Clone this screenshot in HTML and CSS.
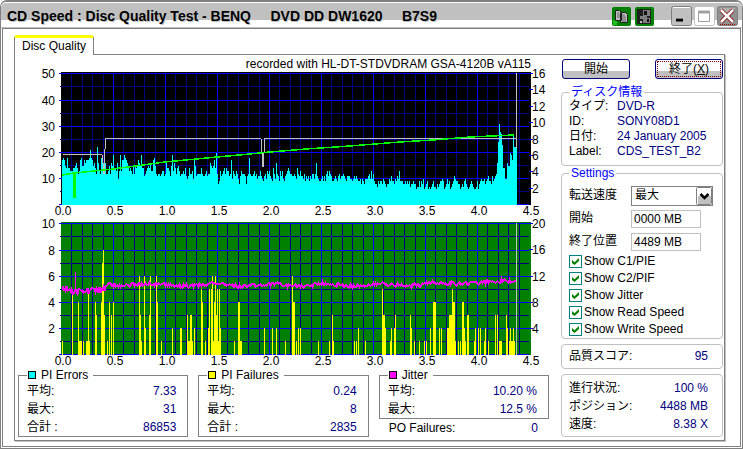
FILE: index.html
```html
<!DOCTYPE html>
<html lang="ja">
<head>
<meta charset="utf-8">
<title>CD Speed</title>
<link rel="stylesheet" href="styles.css">
</head>
<body>
<div class="window">
  <header class="titlebar">
    <h1 class="title">CD Speed : Disc Quality Test - BENQ     DVD DD DW1620     B7S9</h1>
    <div class="tools">
      <button class="tool" type="button" aria-label="Copy">
        <svg width="19" height="19" viewBox="0 0 19 19"><rect width="19" height="19" rx="2" fill="#008000"/><path d="M1 13h4v5H1z" fill="#20c020"/><path d="M3.500 3.500h4l2 2v8h-6zM8.500 5.500h5l2 2v8h-7z" fill="#c0c0c0" stroke="#202020"/><path d="M5 6h2M5 8h3M5 10h3M10 8h3M10 10h4M10 12h4M10 14h4" stroke="#606060"/></svg>
      </button>
      <button class="tool" type="button" aria-label="Save">
        <svg width="19" height="19" viewBox="0 0 19 19"><rect width="19" height="19" rx="2" fill="#008000"/><rect x="2" y="2" width="14" height="15" fill="#202020"/><path d="M8 3h7v6h-3v2h3v5H8v-4H5V9h3z" fill="#808080"/><path d="M9 4h3v4H9zM12 12h2v3h-2z" fill="#101010"/><path d="M5 14h2v2H5z" fill="#c0c0c0"/></svg>
      </button>
    </div>
    <div class="controls">
      <button class="control" type="button" aria-label="Minimize">
        <svg width="21" height="20" viewBox="0 0 21 20"><rect x=".5" y=".5" width="20" height="19" rx="2" fill="#c0c0c0" stroke="#808080"/><path d="M2 1.500h17" stroke="#fff"/><path d="M5 14h7" stroke="#000" stroke-width="3"/><path d="M5 12.500h7" stroke="#808080"/></svg>
      </button>
      <button class="control" type="button" aria-label="Maximize">
        <svg width="21" height="20" viewBox="0 0 21 20"><rect x=".5" y=".5" width="20" height="19" rx="2" fill="#fff" stroke="#c0c0c0"/><path d="M4.500 6.500h11v9h-11z" fill="#fff" stroke="#a0a0a0"/><path d="M4 6h12" stroke="#a0a0a0" stroke-width="3"/></svg>
      </button>
      <button class="control" type="button" aria-label="Close">
        <svg width="21" height="20" viewBox="0 0 21 20"><rect x=".5" y=".5" width="20" height="19" rx="2" fill="#909090" stroke="#808080"/><path d="M2 2h17l-8 6z" fill="#b0b0b0"/><path d="M4 4l12 12M16 4L4 16" stroke="#800000" stroke-width="4"/><path d="M4 4l12 12M16 4L4 16" stroke="#fff" stroke-width="2.500"/><path d="M3 18.500h16" stroke="#a00000" stroke-dasharray="1 1"/></svg>
      </button>
    </div>
  </header>
  <main class="client">
    <button class="tab" type="button">Disc Quality</button>
    <div class="panel">
      <section class="results">
        <svg class="chart" id="errors-chart" viewBox="18 56 531 164" role="img" aria-label="PI Errors"></svg>
        <svg class="chart" id="failures-chart" viewBox="18 220 531 148" role="img" aria-label="PI Failures"></svg>
        <div class="stats">
          <fieldset class="stat">
            <legend><i class="swatch cyan"></i>PI Errors</legend>
            <dl>
              <div class="row"><dt>平均:</dt><dd>7.33</dd></div>
              <div class="row"><dt>最大:</dt><dd>31</dd></div>
              <div class="row"><dt>合計 :</dt><dd>86853</dd></div>
            </dl>
          </fieldset>
          <fieldset class="stat">
            <legend><i class="swatch yellow"></i>PI Failures</legend>
            <dl>
              <div class="row"><dt>平均:</dt><dd>0.24</dd></div>
              <div class="row"><dt>最大:</dt><dd>8</dd></div>
              <div class="row"><dt>合計 :</dt><dd>2835</dd></div>
            </dl>
          </fieldset>
          <div>
            <fieldset class="stat">
              <legend><i class="swatch magenta"></i>Jitter</legend>
              <dl>
                <div class="row"><dt>平均:</dt><dd>10.20 %</dd></div>
                <div class="row"><dt>最大:</dt><dd>12.5 %</dd></div>
              </dl>
            </fieldset>
            <dl class="po"><div class="row"><dt>PO Failures:</dt><dd>0</dd></div></dl>
          </div>
        </div>
      </section>
      <aside class="side">
        <div class="actions">
          <button class="push" type="button">開始</button>
          <button class="push focused" type="button">終了(<u>X</u>)</button>
        </div>
        <fieldset class="group disc">
          <legend>ディスク情報</legend>
          <dl>
            <div class="info"><dt>タイプ:</dt><dd>DVD-R</dd></div>
            <div class="info"><dt>ID:</dt><dd>SONY08D1</dd></div>
            <div class="info"><dt>日付:</dt><dd>24 January 2005</dd></div>
            <div class="info"><dt>Label:</dt><dd>CDS_TEST_B2</dd></div>
          </dl>
        </fieldset>
        <fieldset class="group settings">
          <legend>Settings</legend>
          <div class="field"><label for="speed">転送速度</label>
            <span class="combo"><select id="speed"><option>最大</option></select>
              <svg class="arrow" width="16" height="18" viewBox="0 0 16 18"><rect x=".5" y=".5" width="15" height="17" rx="1" fill="#fff" stroke="#808080"/><path d="M2 9h13v8H2z" fill="#c0c0c0"/><path d="M4.500 7l4 4 4-4" fill="none" stroke="#000" stroke-width="2.500"/></svg></span></div>
          <div class="field"><label for="start">開始</label><input class="text" id="start" type="text" value="0000 MB"></div>
          <div class="field"><label for="end">終了位置</label><input class="text" id="end" type="text" value="4489 MB"></div>
          <label class="check"><input type="checkbox" checked>Show C1/PIE</label>
          <label class="check"><input type="checkbox" checked>Show C2/PIF</label>
          <label class="check"><input type="checkbox" checked>Show Jitter</label>
          <label class="check"><input type="checkbox" checked>Show Read Speed</label>
          <label class="check"><input type="checkbox" checked>Show Write Speed</label>
        </fieldset>
        <dl class="group score"><div class="row"><dt>品質スコア:</dt><dd>95</dd></div></dl>
        <dl class="group progress">
          <div class="row"><dt>進行状況:</dt><dd>100 %</dd></div>
          <div class="row"><dt>ポジション:</dt><dd>4488 MB</dd></div>
          <div class="row"><dt>速度:</dt><dd>8.38 X</dd></div>
        </dl>
      </aside>
    </div>
  </main>
</div>
<script src="charts.js"></script>
</body>
</html>
```
FILE: styles.css
```css
* { box-sizing: border-box; }

body {
  margin: 0;
  background: #fff;
  color: #000;
  font: 12px/15px "Liberation Sans", "Noto Sans CJK JP", sans-serif;
}

button, input, select { font: inherit; color: inherit; }
dl, dd, fieldset { margin: 0; }
fieldset { min-width: 0; }
svg { display: block; }

.window {
  display: flex;
  flex-direction: column;
  min-height: 100vh;
  padding: 0 1px 1px;
  border: 1px solid #808080;
  border-top-width: 2px;
  border-radius: 7px 7px 0 0;
}

.titlebar {
  display: flex;
  align-items: center;
  height: 26px;
  margin: 0 -1px;
  padding: 2px 4px 0 6px;
  border-top: 1px solid #fff;
  border-bottom: 1px solid #c0c0c0;
  border-radius: 5px 5px 0 0;
  background: linear-gradient(#c0c0c0 17px, #fff 17px);
}

.title {
  flex: 1;
  margin: 0;
  font-size: 14px;
  line-height: 20px;
  white-space: pre;
  text-shadow: 1px 1px #c0c0c0;
}

.tools, .controls { display: flex; }
.tools { gap: 4px; margin-right: 17px; }
.controls { gap: 2px; }
.tool, .control { padding: 0; border: 0; background: none; }

.client {
  flex: 1;
  display: flex;
  flex-direction: column;
  align-items: stretch;
  padding: 6px 15px 5px 11px;
  border: 1px solid #808080;
}

.tab {
  align-self: flex-start;
  position: relative;
  height: 20px;
  margin-bottom: -1px;
  padding: 0 7px;
  border: 1px solid #808080;
  border-top: 3px solid #ff0;
  border-bottom: 0;
  border-radius: 3px 3px 0 0;
  background: #fff;
}

.panel {
  flex: 1;
  display: grid;
  grid-template-columns: 1fr 163px;
  gap: 12px;
  padding: 1px 0 0 3px;
  border: 1px solid #808080;
  box-shadow: 1px 1px #c0c0c0;
}

.chart { width: 100%; overflow: visible; }
.chart text { font-size: 12px; }

.stats {
  display: grid;
  grid-template-columns: repeat(3, 1fr);
  gap: 10px;
}

.stat { padding: 0 0 0 8px; border: 1px solid #808080; }
.stat legend {
  display: flex;
  align-items: center;
  gap: 5px;
  padding: 0 5px 0 1px;
  line-height: 14px;
}

.swatch { width: 8px; height: 8px; outline: 1px solid #000; outline-offset: -1px; }
.cyan { background: #0ff; }
.yellow { background: #ff0; }
.magenta { background: #f0f; }

.row { display: flex; justify-content: space-between; line-height: 18px; }
.row dd, .info dd { color: #000080; }
.stat dd { padding-right: 11px; }
.po { padding: 0 11px 0 10px; }

.side { display: flex; flex-direction: column; padding: 3px 1px 0 0; }

.actions { display: flex; justify-content: space-between; margin: 0 0 6px 1px; }
.push {
  width: 68px;
  height: 20px;
  padding: 0;
  border: 1px solid #000080;
  border-radius: 3px;
  background: linear-gradient(#fff 11px, #c0c0c0 11px);
  line-height: 16px;
}
.focused { outline: 1px dotted #800000; outline-offset: -3px; }

.group { border: 1px solid #c0c0c0; border-radius: 4px; padding: 0 14px 0 7px; }
.group legend { padding: 0 2px; color: #00f; line-height: 14px; }
.disc { padding-bottom: 6px; }
.info { display: grid; grid-template-columns: 48px 1fr; white-space: nowrap; }

.settings { padding: 4px 9px 0 7px; }
.field { display: grid; grid-template-columns: 62px 1fr; align-items: center; height: 23px; }
.combo { position: relative; }
.combo select {
  display: block;
  width: 100%;
  height: 20px;
  padding: 0 3px;
  appearance: none;
  border: 1px solid #808080;
  border-radius: 0;
  background: #fff;
}
.arrow { position: absolute; top: 1px; right: 1px; pointer-events: none; }
.text {
  width: 70px;
  height: 18px;
  padding: 0 2px;
  border: 1px solid #c0c0c0;
}

.check { display: flex; align-items: center; gap: 2px; height: 17px; }
.check input {
  width: 13px;
  height: 13px;
  margin: 0;
  appearance: none;
  border: 1px solid #008080;
  background: #fff;
}
.check input:checked::before {
  content: "";
  display: block;
  width: 7px;
  height: 7px;
  margin: 2px;
  background: #008000;
  clip-path: polygon(0 29%, 36% 60%, 100% 0, 100% 42%, 36% 100%, 0 70%);
}

.score { margin-top: 5px; }
.score .row { line-height: 23px; }
.progress { margin-top: 5px; padding-top: 4px; padding-bottom: 3px; }
```
FILE: charts.js
```js
const LEFT = 61;
const STEP = 52;

// PI Errors per sample, one base-36 digit each
const trend =
  "hihfeieedd" + "deefgecdhi" + "ffhghhhili" + "hfgecmgdci" + "jgdgccdfcg" +
  "fjeedgadjd" + "hhjihgededc" + "fcfefhgfje" + "ebcdefegdd" + "hifcbccbcd" +
  "dbcgeedbfj" + "dgecefdbcc" + "dcebabeccd" + "aifbccccec" + "bbcdbccgfe" +
  "fhekc89dbc" + "deceddbcha" + "dcbdca8bdc" + "ccb8bcicbb" + "cdbcabbdba" +
  "9bcadcdba9" + "ecagcb9dbd" + "a9bcdedccb" + "bcbaecbdbb" + "ac9bab9bac" +
  "cacgba99ab" + "9b9cdbdcb9" + "9aba9bcabb" + "cba9bbbaa9" + "ababa99a8a" +
  "98aaabcada" + "c988798998" + "a98788a9b9" + "98a9bad999" + "8898989788" +
  "9886779798" + "a678967678" + "977687899a" + "9678a89678" + "9ba9988678" +
  "79a8767898" + "76679689a9" + "9a89ab998b" + "9abc9cb9dh";
const ending = "govsrneeaagffkjhrmmm";
const errors = (trend.slice(0, 435) + ending).split("").map(c => parseInt(c, 36));

// [first column, values of the columns that follow it]
const failures = [
  [62, "1"], [72, "5"], [78, "4111"], [83, "1"], [86, "1151"], [95, "43"],
  [101, "4783"], [107, "1"], [109, "4"], [111, "3"], [113, "4"], [139, "631"],
  [144, "62"], [149, "36"], [156, "64"], [161, "1"], [172, "2"], [180, "22"],
  [187, "311331"], [194, "2"], [201, "54"], [205, "1"], [208, "25"],
  [211, "5614635152"], [234, "1"], [238, "4411"], [264, "2"], [272, "2"],
  [276, "2"], [285, "1"], [292, "644"], [296, "1"], [298, "2"], [300, "2"],
  [318, "1"], [329, "1"], [332, "31"], [354, "1"], [356, "1"], [358, "2"],
  [365, "1"], [382, "5332"], [390, "12"], [394, "23"], [410, "32"], [414, "1"],
  [419, "1"], [424, "1"], [426, "1"], [430, "2"], [433, "444"], [439, "2"],
  [441, "2"], [447, "223335441"], [458, "1"], [460, "1"], [462, "4421"],
  [467, "33"], [474, "12"], [478, "2"], [480, "2"], [484, "12"], [488, "1"],
  [495, "3"], [497, "3"], [499, "111"], [506, "32"], [509, "121121"], [516, "1"]
];

const line = (x1, y1, x2, y2) => `M${x1} ${y1}L${x2} ${y2}`;
const stroke = (d, color, width = 1) =>
  `<path d="${d}" fill="none" stroke="${color}" stroke-width="${width}" shape-rendering="crispEdges"/>`;
const label = (x, y, text, anchor) =>
  `<text x="${x}" y="${y}" text-anchor="${anchor}">${text}</text>`;

function frame(top, fill, leftLabels, rightLabels, rightGap) {
  const rows = [0, 27, 53, 79, 105, 131].map(y => top + y + 0.5);
  let minor = "", major = "", ticks = "", text = "";
  for (let i = 1; i <= 45; i++) {
    const x = LEFT + Math.round(i * STEP / 5) + 0.5;
    if (x > 529) break;
    if (i % 5) minor += line(x, top, x, top + 132);
    else major += line(x, top, x, top + 132);
  }
  rows.forEach((y, i) => {
    major += line(59, y, 529, y);
    if (i < 5) minor += line(60, y + 13, 529, y + 13);
    if (leftLabels[i]) text += label(55, y + 4, leftLabels[i], "end");
  });
  rightLabels.forEach((value, i) => {
    const y = Math.round(top + i * rightGap) + 0.5;
    ticks += line(529, y, 533, y);
    text += label(532, y + 4, value, "start");
  });
  for (let i = 0; i <= 9; i++) {
    text += label(LEFT + 2 + i * STEP, top + 142, (i / 2).toFixed(1), "middle");
  }
  return `<rect x="61" y="${top - 1}" width="470" height="133" fill="${fill}"/>` +
    stroke(minor, "#000080") + stroke(major, "#00f") + stroke(ticks, "#00f") + text;
}

function drawErrors() {
  let bars = "";
  errors.forEach((v, i) => {
    bars += line(62.5 + i, 205, 62.5 + i, Math.round(205 - v * 2.62));
  });
  const read = "M62 175L74 173V197L75 197V173L113 169L165 162L217 157L250 154L270 152L306 149L350 146L400 142L433 140L470 137L514 135";
  const write = "M63 154.500H102L104 174V160L106 138.500H261L263 167L265 138.500H516";
  document.getElementById("errors-chart").innerHTML =
    frame(73, "#000", [50, 40, 30, 20, 10], [16, 14, 12, 10, 8, 6, 4, 2], 16.4) +
    stroke(bars, "#0ff") + stroke(write, "#c0c0c0") + stroke(read, "#0f0", 1.5) +
    stroke(line(516.5, 73, 516.5, 148), "#c0c0c0") +
    label(531, 68, "recorded with HL-DT-STDVDRAM GSA-4120B vA115", "end");
}

function drawFailures() {
  let bars = "";
  failures.forEach(([start, values]) => values.split("").forEach((v, i) => {
    bars += line(start + i + 0.5, 355, start + i + 0.5, Math.round(354 - v * 13));
  }));
  let seed = 7, jitter = "";
  for (let x = 62; x < 516; x++) {
    seed = (seed * 1103 + 12345) % 65536;
    const noise = (seed / 65536 - 0.5) * (x < 105 ? 6 : 4);
    const base = x < 72 ? 287 : x < 105 ? 291 : x < 400 ? 285 : 285 - (x - 400) / 32;
    const wave = Math.sin(x / 9) + (x > 120 && x < 150 ? -1 : 0);
    const y = Math.round(base + noise + wave);
    jitter += `${x === 62 ? "M" : "L"}${x + 0.5} ${y}`;
  }
  document.getElementById("failures-chart").innerHTML =
    frame(223, "#008000", [10, 8, 6, 4, 2], [20, 16, 12, 8, 4], 26.3) +
    stroke(bars, "#ff0") + stroke(jitter, "#f0f", 2) +
    stroke(line(75.5, 272, 75.5, 290), "#f0f") +
    stroke(line(516.5, 223, 516.5, 354), "#c0c0c0");
}

drawErrors();
drawFailures();
```
